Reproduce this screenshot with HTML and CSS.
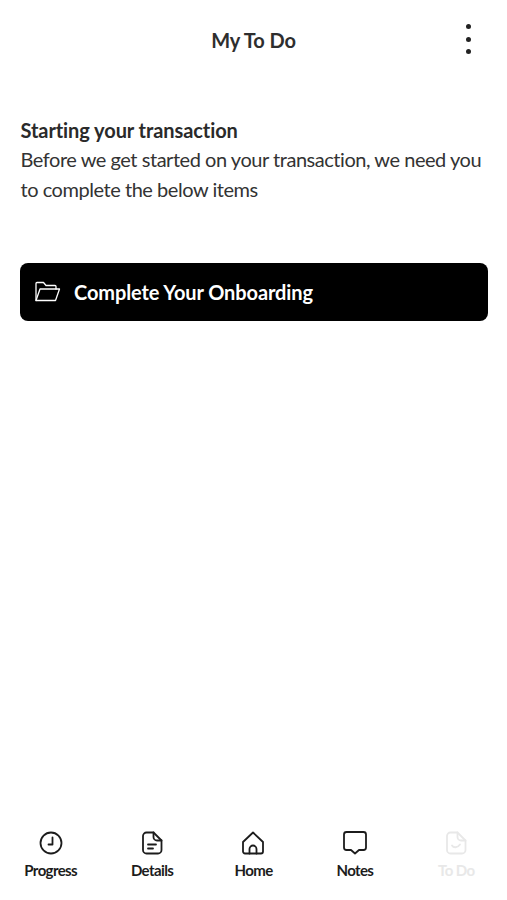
FILE: index.html
```html
<!DOCTYPE html>
<html lang="en">
<head>
<meta charset="utf-8">
<title>My To Do</title>
<link rel="stylesheet" href="styles.css">
</head>
<body>
<div class="app">
  <header class="topbar">
    <h1 class="title">My To Do</h1>
    <button class="more" aria-label="More"><span></span><span></span><span></span></button>
  </header>
  <main class="content">
    <p class="intro"><strong>Starting your transaction</strong><br>Before we get started on your transaction, we need you to complete the below items</p>
    <a class="task">
      <svg class="task-icon" width="28" height="22" viewBox="0 0 28 22" fill="none" stroke="#fff" stroke-width="1.3" stroke-linejoin="round" stroke-linecap="round"><path d="M2 19.500V2.500c0-.6.4-1 1-1h6.500l2.500 3h9c.6 0 1 .4 1 1v2.500"/><path d="M2 19.500 6 8h19.500l-4 11.500z"/></svg>
      <span>Complete Your Onboarding</span>
    </a>
  </main>
  <nav class="tabs">
    <a class="tab">
      <svg width="26" height="26" viewBox="0 0 26 26" fill="none" stroke="currentColor" stroke-width="1.800" stroke-linecap="round" stroke-linejoin="round"><circle cx="13" cy="13" r="10.500"/><path d="M14.500 7.500V14.500h-4"/></svg>
      <span>Progress</span>
    </a>
    <a class="tab">
      <svg width="26" height="26" viewBox="0 0 26 26" fill="none" stroke="currentColor" stroke-width="1.800" stroke-linecap="round" stroke-linejoin="round"><path d="M7.500 2.500h7l8 8V20a3.500 3.500 0 0 1-3.500 3.500H7.500A3.500 3.500 0 0 1 4 20V6a3.500 3.500 0 0 1 3.500-3.500z"/><path d="M14.500 2.500V7a3.500 3.500 0 0 0 3.500 3.500h4.500"/><path d="M9 14.500h8M9 18.500h5"/></svg>
      <span>Details</span>
    </a>
    <a class="tab">
      <svg width="26" height="26" viewBox="0 0 26 26" fill="none" stroke="currentColor" stroke-width="1.800" stroke-linecap="round" stroke-linejoin="round"><path d="M5 23.500a2 2 0 0 1-2-2V12L13 2.500 23 12v9.500a2 2 0 0 1-2 2z"/><path d="M9.500 23.500V19a3.500 3.500 0 0 1 7 0v4.500"/></svg>
      <span>Home</span>
    </a>
    <a class="tab">
      <svg width="26" height="26" viewBox="0 0 26 26" fill="none" stroke="currentColor" stroke-width="1.800" stroke-linecap="round" stroke-linejoin="round"><path d="M4.500 2h17A2.500 2.500 0 0 1 24 4.500v13a2.500 2.500 0 0 1-2.500 2.500h-4.500L13 23.500 9 20H4.500A2.500 2.500 0 0 1 2 17.500v-13A2.500 2.500 0 0 1 4.500 2z"/></svg>
      <span>Notes</span>
    </a>
    <a class="tab tab-off">
      <svg width="26" height="26" viewBox="0 0 26 26" fill="none" stroke="currentColor" stroke-width="1.800" stroke-linecap="round" stroke-linejoin="round"><path d="M7.500 2.500h7l8 8V20a3.500 3.500 0 0 1-3.500 3.500H7.500A3.500 3.500 0 0 1 4 20V6a3.500 3.500 0 0 1 3.500-3.500z"/><path d="M14.500 2.500V7a3.500 3.500 0 0 0 3.500 3.500h4.500"/><path d="M9 15.500c1.500 2.500 5.500 2.500 8-1"/></svg>
      <span>To Do</span>
    </a>
  </nav>
</div>
</body>
</html>
```

FILE: styles.css
```css
* { box-sizing: border-box; }
html, body { margin: 0; padding: 0; background: #fff; }
body { font-family: Lato, "Liberation Sans", sans-serif; color: #222; }
.app { width: 507px; height: 900px; display: flex; flex-direction: column; }
.topbar { height: 80px; position: relative; display: flex; align-items: center; justify-content: center; }
.title { margin: 0; font-size: 20px; font-weight: 700; color: #2e2e2e; letter-spacing: -0.1px; }
.more { position: absolute; right: 29px; top: 24px; width: 20px; height: 30px; padding: 0; border: 0; background: none; display: flex; flex-direction: column; align-items: center; justify-content: space-between; }
.more span { width: 5px; height: 5px; border-radius: 50%; background: #222; }
.content { flex: 1; padding: 35.500px 19.500px 0 20px; }
.intro { margin: 0; padding-left: 0.500px; font-size: 20px; line-height: 29.500px; color: #333; letter-spacing: -0.46px; }
.intro strong { color: #2a2a2a; letter-spacing: -0.08px; }
.task { margin-top: 58.500px; height: 58.500px; background: #000; color: #fff; border-radius: 8px; display: flex; align-items: center; gap: 12px; padding-left: 14px; font-size: 20px; font-weight: 700; letter-spacing: -0.1px; }
.tabs { height: 90px; display: grid; grid-template-columns: repeat(5, 1fr); padding: 0 0 21px; }
.tab { display: flex; flex-direction: column; align-items: center; justify-content: flex-end; gap: 5px; font-size: 15px; font-weight: 700; color: #1c1c1c; letter-spacing: -0.6px; }
.tab-off { color: #e8e8e8; }
```
